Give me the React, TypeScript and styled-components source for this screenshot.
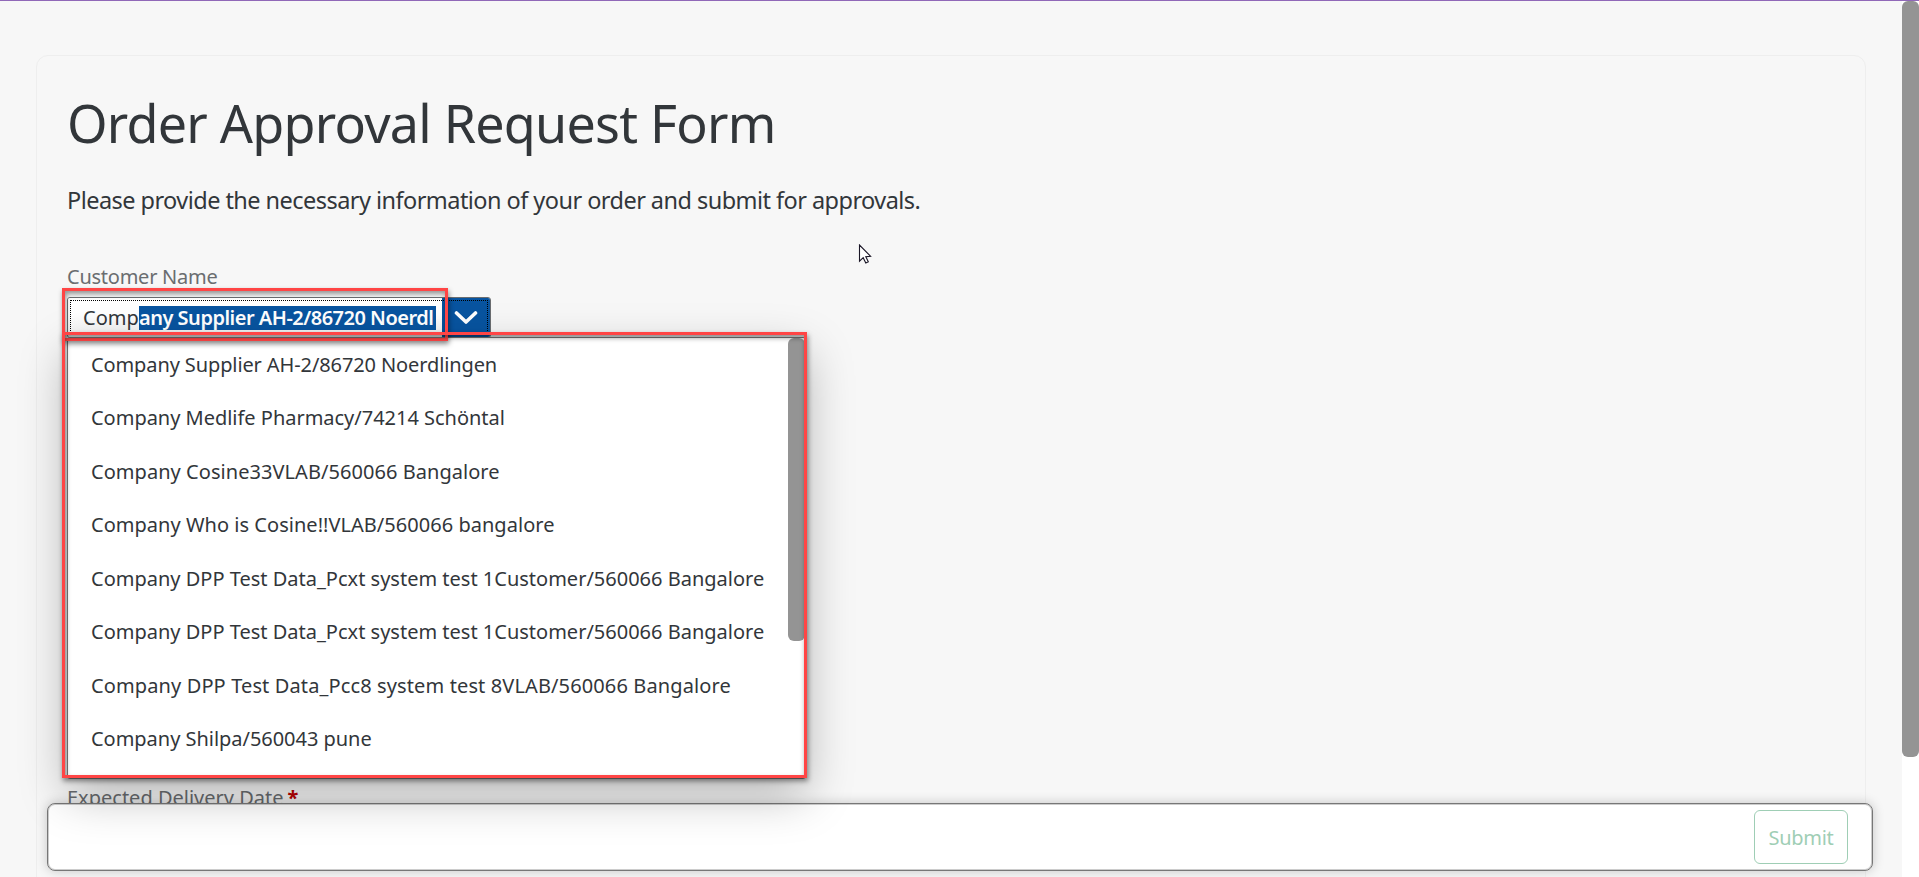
import React from "react";
import styled, { createGlobalStyle, css } from "styled-components";

const GlobalStyle = createGlobalStyle`
  *, *::before, *::after { box-sizing: border-box; }
  html, body { margin: 0; padding: 0; overflow: hidden; }
  body {
    background: #f7f7f7;
    color: #32363a;
    font-family: "Noto Sans", "Open Sans", sans-serif;
    font-size: 20px;
  }
`;

const Page = styled.div`
  position: relative;
  display: flex;
  width: 100%;
  height: 877px;
  overflow: hidden;
  border-top: 1px solid #9068b8;
`;

const Main = styled.main`
  flex: 1;
  padding: 54px 36px 0;
  overflow: hidden;
`;

const ScrollTrack = styled.div`
  width: 17px;
  background: #fff;
`;

const ScrollThumb = styled.div<{ $length: number }>`
  height: ${(p) => p.$length}px;
  border-radius: 6px;
  background: #949494;
`;

const FormCard = styled.section`
  height: 1000px;
  padding: 28px 30px;
  border: 1px solid #eeeeee;
  border-radius: 12px;
`;

const Title = styled.h1`
  margin: 0;
  font-size: 52px;
  line-height: 78px;
  font-weight: 400;
  letter-spacing: -0.75px;
`;

const Description = styled.p`
  margin: 20px 0 0;
  font-size: 23.5px;
  line-height: 36px;
  letter-spacing: -0.545px;
`;

const Label = styled.label<{ $spacing?: number }>`
  display: block;
  line-height: 28px;
  color: #6a6d70;
  letter-spacing: ${(p) => p.$spacing ?? 0}px;
`;

const Required = styled.span`
  margin-left: 4px;
  color: #bb0000;
  font-weight: 700;
`;

const CustomerField = styled.div`
  position: relative;
  margin-top: 45px;
  height: 521px;
`;

const ComboBox = styled.div`
  position: relative;
  display: flex;
  width: 424px;
  height: 41px;
  margin-top: 6px;
  border: 1px solid #6a6d70;
  border-radius: 3px;
  background: #fff;
  overflow: hidden;

  &::after {
    content: "";
    position: absolute;
    inset: 2px 2px 2px 2px;
    border: 1px dotted #000;
  }
`;

const ComboInput = styled.div`
  flex: 1;
  display: flex;
  align-items: center;
  padding: 0 6px 0 15px;
  overflow: hidden;
  white-space: nowrap;
  line-height: 24px;
  background: linear-gradient(#fff 40%, #f1f1f1);
`;

const TypedText = styled.span`
  width: 56px;
`;

const SelectedText = styled.span`
  flex: 1;
  height: 24px;
  background: #0854a0;
  color: #fff;
  font-weight: 600;
  letter-spacing: -0.5px;
`;

const ComboArrow = styled.div`
  display: flex;
  align-items: center;
  justify-content: center;
  width: 48px;
  background: #0854a0;
`;

const Popover = styled.div`
  position: absolute;
  z-index: 3;
  top: 74px;
  left: 0;
  display: flex;
  width: 739px;
  height: 442px;
  border: 1px solid #777;
  border-radius: 3px;
  background: #fff;
  box-shadow: 0 16px 48px rgba(0, 0, 0, 0.28);
  overflow: hidden;
`;

const Options = styled.ul`
  flex: 1;
  margin: 0;
  padding: 0;
  list-style: none;
`;

const Option = styled.li<{ $spacing: number }>`
  height: 53.45px;
  padding-left: 23px;
  line-height: 53.45px;
  white-space: nowrap;
  letter-spacing: ${(p) => p.$spacing}px;
`;

const highlight = css`
  position: absolute;
  border: 3px solid #ff4545;
  box-shadow: 1px 3px 5px rgba(0, 0, 0, 0.45), inset 1px 3px 5px rgba(0, 0, 0, 0.4);
  pointer-events: none;
`;

const InputHighlight = styled.div`
  ${highlight}
  z-index: 4;
  top: 25px;
  left: -5px;
  width: 386px;
  height: 53px;
`;

const ListHighlight = styled.div`
  ${highlight}
  z-index: 5;
  top: 69px;
  left: -5px;
  width: 745px;
  height: 446px;
`;

const FooterBar = styled.footer`
  position: absolute;
  z-index: 2;
  left: 47px;
  right: 46px;
  bottom: 6px;
  display: flex;
  align-items: center;
  justify-content: flex-end;
  height: 68px;
  padding-right: 24px;
  border: 1px solid #777;
  border-radius: 8px;
  background: #fff;
  box-shadow: inset 0 0 0 1px rgba(0, 0, 0, 0.2), 0 0 12px rgba(0, 0, 0, 0.2);
`;

const SubmitButton = styled.button`
  width: 94px;
  height: 54px;
  padding: 0;
  border: 1px solid #9fceb5;
  border-radius: 6px;
  background: #fff;
  color: #9fceb5;
  font: inherit;
  letter-spacing: -0.3px;
`;

const Pointer = styled.svg`
  position: absolute;
  left: 858px;
  top: 243px;
`;

const companies: { name: string; spacing: number }[] = [
  { name: "Company Supplier AH-2/86720 Noerdlingen", spacing: -0.11 },
  { name: "Company Medlife Pharmacy/74214 Schöntal", spacing: -0.02 },
  { name: "Company Cosine33VLAB/560066 Bangalore", spacing: 0.05 },
  { name: "Company Who is Cosine!!VLAB/560066 bangalore", spacing: 0.03 },
  { name: "Company DPP Test Data_Pcxt system test 1Customer/560066 Bangalore", spacing: 0 },
  { name: "Company DPP Test Data_Pcxt system test 1Customer/560066 Bangalore", spacing: 0 },
  { name: "Company DPP Test Data_Pcc8 system test 8VLAB/560066 Bangalore", spacing: 0.12 },
  { name: "Company Shilpa/560043 pune", spacing: -0.03 },
];

export default function App() {
  return (
    <>
      <GlobalStyle />
      <Page>
        <Main>
          <FormCard>
            <Title>Order Approval Request Form</Title>
            <Description>
              Please provide the necessary information of your order and submit for approvals.
            </Description>
            <CustomerField>
              <Label $spacing={-0.25}>Customer Name</Label>
              <ComboBox>
                <ComboInput>
                  <TypedText>Comp</TypedText>
                  <SelectedText>any Supplier AH-2/86720 Noerdl</SelectedText>
                </ComboInput>
                <ComboArrow>
                  <svg width="24" height="16" viewBox="0 0 24 16">
                    <path d="M2.5 3 L12 12 L21.5 3" fill="none" stroke="#fff" strokeWidth="3.6" strokeLinecap="round" strokeLinejoin="round" />
                  </svg>
                </ComboArrow>
              </ComboBox>
              <Popover>
                <Options>
                  {companies.map((company, i) => (
                    <Option key={i} $spacing={company.spacing}>
                      {company.name}
                    </Option>
                  ))}
                </Options>
                <ScrollTrack>
                  <ScrollThumb $length={303} />
                </ScrollTrack>
              </Popover>
              <InputHighlight />
              <ListHighlight />
            </CustomerField>
            <Label>
              Expected Delivery Date<Required>*</Required>
            </Label>
          </FormCard>
        </Main>
        <ScrollTrack>
          <ScrollThumb $length={756} />
        </ScrollTrack>
        <FooterBar>
          <SubmitButton>Submit</SubmitButton>
        </FooterBar>
        <Pointer width="14" height="21" viewBox="0 0 14 21">
          <path d="M1.5 1 V17.2 L5.2 13.7 L7.8 19 L10.3 17.8 L7.8 12.7 L12.6 12.3 Z" fill="#fff" stroke="#1a1626" strokeWidth="1.1" />
        </Pointer>
      </Page>
    </>
  );
}
